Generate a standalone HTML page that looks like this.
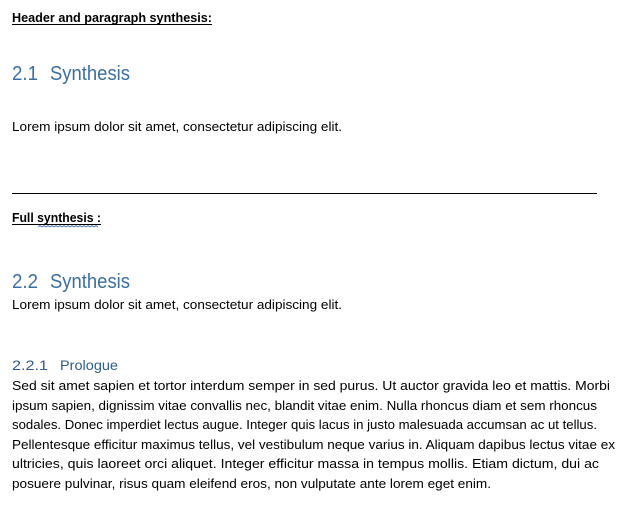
<!DOCTYPE html>
<html><head><meta charset="utf-8"><style>
html,body{margin:0;padding:0;background:#fff;width:620px;height:510px;overflow:hidden}
svg{display:block}
text{font-family:"Liberation Sans",sans-serif;fill:#000}
.h{fill:#3b6fa3;font-size:20px}
.b{font-size:13.3px}
</style></head><body>
<svg width="620" height="510" xmlns="http://www.w3.org/2000/svg">
<text x="12" y="22" font-size="13" font-weight="bold" textLength="200" lengthAdjust="spacingAndGlyphs">Header and paragraph synthesis:</text>
<rect x="12" y="24" width="200" height="1" fill="#000"/>
<text class="h" x="12" y="80" textLength="26" lengthAdjust="spacingAndGlyphs">2.1</text>
<text class="h" x="50" y="80" textLength="80" lengthAdjust="spacingAndGlyphs">Synthesis</text>
<text class="b" x="12" y="131" textLength="330" lengthAdjust="spacingAndGlyphs">Lorem ipsum dolor sit amet, consectetur adipiscing elit.</text>
<rect x="12" y="193" width="585" height="1" fill="#000"/>
<text x="12" y="222" font-size="13" font-weight="bold" textLength="89" lengthAdjust="spacingAndGlyphs">Full synthesis :</text>
<rect x="12" y="224" width="89" height="1" fill="#000"/>
<path d="M38 227 l2 -1.5 l2 1.5 l2 -1.5 l2 1.5 l2 -1.5 l2 1.5 l2 -1.5 l2 1.5 l2 -1.5 l2 1.5 l2 -1.5 l2 1.5 l2 -1.5 l2 1.5 l2 -1.5 l2 1.5 l2 -1.5 l2 1.5 l2 -1.5 l2 1.5 l2 -1.5 l2 1.5 l2 -1.5 l2 1.5 l2 -1.5 l2 1.5 l2 -1.5 l2 1.5 l2 -1.5 l2 1.5" stroke="#4a6fd0" stroke-width="0.8" fill="none"/>
<text class="h" x="12" y="288" textLength="26" lengthAdjust="spacingAndGlyphs">2.2</text>
<text class="h" x="50" y="288" textLength="80" lengthAdjust="spacingAndGlyphs">Synthesis</text>
<text class="b" x="12" y="309" textLength="330" lengthAdjust="spacingAndGlyphs">Lorem ipsum dolor sit amet, consectetur adipiscing elit.</text>
<text x="12" y="370" font-size="14" style="fill:#2f5d8e" textLength="36" lengthAdjust="spacingAndGlyphs">2.2.1</text>
<text x="60" y="370" font-size="14" style="fill:#2f5d8e" textLength="58" lengthAdjust="spacingAndGlyphs">Prologue</text>
<text class="b" x="12" y="390" textLength="598" lengthAdjust="spacingAndGlyphs">Sed sit amet sapien et tortor interdum semper in sed purus. Ut auctor gravida leo et mattis. Morbi</text>
<text class="b" x="12" y="410" textLength="585" lengthAdjust="spacingAndGlyphs">ipsum sapien, dignissim vitae convallis nec, blandit vitae enim. Nulla rhoncus diam et sem rhoncus</text>
<text class="b" x="12" y="429" textLength="585" lengthAdjust="spacingAndGlyphs">sodales. Donec imperdiet lectus augue. Integer quis lacus in justo malesuada accumsan ac ut tellus.</text>
<text class="b" x="12" y="449" textLength="603" lengthAdjust="spacingAndGlyphs">Pellentesque efficitur maximus tellus, vel vestibulum neque varius in. Aliquam dapibus lectus vitae ex</text>
<text class="b" x="12" y="468" textLength="587" lengthAdjust="spacingAndGlyphs">ultricies, quis laoreet orci aliquet. Integer efficitur massa in tempus mollis. Etiam dictum, dui ac</text>
<text class="b" x="12" y="488" textLength="479" lengthAdjust="spacingAndGlyphs">posuere pulvinar, risus quam eleifend eros, non vulputate ante lorem eget enim.</text>
</svg>
</body></html>
